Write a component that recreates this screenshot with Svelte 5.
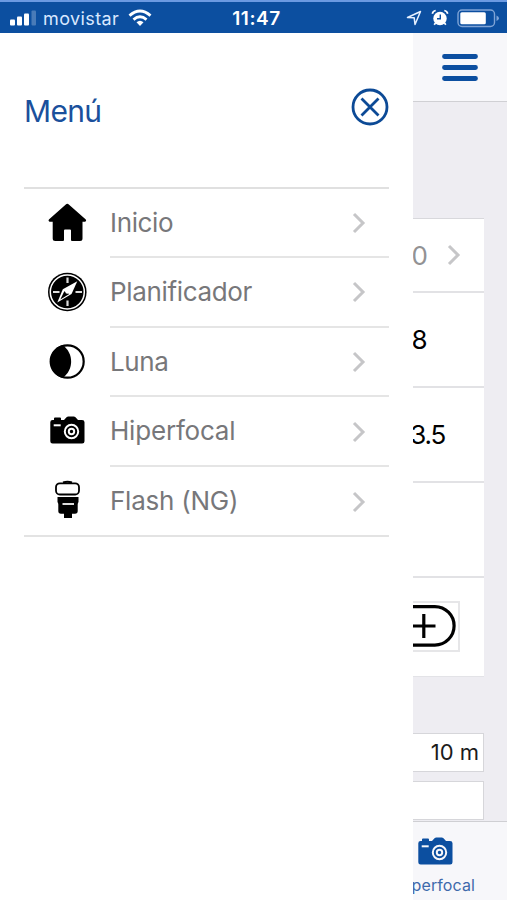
<script lang="ts">
  type Item = { icon: string; label: string; spacing: number };

  const items: Item[] = [
    { icon: 'home', label: 'Inicio', spacing: -0.35 },
    { icon: 'compass', label: 'Planificador', spacing: -0.35 },
    { icon: 'moon', label: 'Luna', spacing: -0.4 },
    { icon: 'camera', label: 'Hiperfocal', spacing: -0.2 },
    { icon: 'flash', label: 'Flash (NG)', spacing: -0.25 }
  ];

  let open = $state(true);
</script>

{#snippet chevron()}
  <svg class="chevron" width="14" height="22" viewBox="0 0 14 22">
    <path d="M2 2l9 9-9 9" fill="none" stroke="#c6c6c8" stroke-width="3" />
  </svg>
{/snippet}

{#snippet camera(bg: string)}
  <svg width="40" height="40" viewBox="0 0 40 40">
    <path d="M7 7.500q0-1 1-1h5q1 0 1 1v1.500h3l2.500-2.700q.8-.8 1.800-.8h5.400q1 0 1.800.8l2.500 2.700H35q2.500 0 2.500 2.300v18.900q0 2.300-2.300 2.300H5.600q-2.300 0-2.300-2.300V11.300Q3.300 9 5.600 9H7z" fill="currentColor" />
    <path d="M6.700 14.300h7" stroke={bg} stroke-width="2" />
    <circle cx="24.500" cy="20.500" r="6.700" fill="none" stroke={bg} stroke-width="2" />
    <circle cx="24.500" cy="20.500" r="2.700" fill="none" stroke={bg} stroke-width="2" />
  </svg>
{/snippet}

<div class="screen">
  <div class="status">
    <div class="carrier">
      <svg width="28" height="18" viewBox="0 0 28 18" fill="#fff">
        <rect x="0" y="10.500" width="5" height="6" rx="1" />
        <rect x="7" y="7.500" width="5" height="9" rx="1" />
        <rect x="14" y="4.500" width="5" height="12" rx="1" />
        <rect x="21.500" y="1.500" width="4.500" height="15" rx="1" opacity=".25" />
      </svg>
      <span>movistar</span>
      <svg class="wifi" width="24" height="18" viewBox="0 0 24 18" fill="none" stroke="#fff" stroke-width="2.800">
        <path d="M1.500 6.600Q12-2.700 22.500 6.600" />
        <path d="M5.500 10.600Q12 5 18.500 10.600" />
        <path d="M12 17l-3.500-3.800Q12 10.200 15.500 13.200z" fill="#fff" stroke="none" />
      </svg>
    </div>
    <div class="time">11:47</div>
    <div class="indicators">
      <svg width="16" height="16" viewBox="0 0 16 16">
        <path d="M1.500 7.500L14.500 1.500 9 14.500 8.200 7.800z" fill="none" stroke="#e6f0ff" stroke-width="1.500" stroke-linejoin="round" />
      </svg>
      <svg class="alarm" width="18" height="18" viewBox="0 0 18 18">
        <circle cx="9" cy="9.500" r="6.700" fill="#fff" />
        <path d="M1.300 4.700Q2 2 4.700 1.500M16.700 4.700Q16 2 13.300 1.500M4.500 14l-1.300 1.800M13.500 14l1.300 1.800" fill="none" stroke="#fff" stroke-width="1.700" />
        <path d="M9.300 5.500v4.300H6" fill="none" stroke="#0c4fa0" stroke-width="1.400" />
      </svg>
      <svg width="43" height="19" viewBox="0 0 43 19">
        <rect x="1" y="1" width="36.500" height="16.500" rx="4" fill="none" stroke="#7fa4d6" stroke-width="1.400" />
        <rect x="3.300" y="3.300" width="25.500" height="12" rx="1.500" fill="#fff" />
        <path d="M39.500 6.500q2.500 1 2.500 2.800t-2.500 2.800z" fill="#7fa4d6" />
      </svg>
    </div>
  </div>

  <div class="body">
    {#if open}
      <nav class="drawer">
        <header>
          <h1>Menú</h1>
          <button aria-label="Cerrar" onclick={() => (open = false)}>
            <svg width="38" height="38" viewBox="0 0 38 38" fill="none" stroke="#0c4a96">
              <circle cx="19" cy="19" r="17" stroke-width="2.800" />
              <path d="M10.500 10.500l17 17M27.500 10.500l-17 17" stroke-width="2.800" />
            </svg>
          </button>
        </header>
        <ul>
          {#each items as item (item.label)}
            <li>
              <span class="icon">
                {#if item.icon === 'home'}
                  <svg width="40" height="40" viewBox="0 0 40 40">
                    <path d="M20.300.8q.8 0 1.500.7L38.800 16.500q1 1.500-.6 2.300H35.500V35.500q0 2.500-2.500 2.500H25q-1 0-1-1V27.500q0-1-1-1h-5q-1 0-1 1V37q0 1-1 1H8.200Q5.700 38 5.700 35.500V18.800H2.500q-1.700-.8-.6-2.300L18.800 1.500q.7-.7 1.500-.7z" />
                  </svg>
                {:else if item.icon === 'compass'}
                  <svg width="40" height="40" viewBox="0 0 40 40">
                    <circle cx="20.300" cy="20" r="19.300" />
                    <circle cx="20.300" cy="20" r="17" fill="none" stroke="#fff" stroke-width="1.500" />
                    <path d="M20.500 5.500v5.500M20.500 28.500v5.500M6 20h6.500M28.500 20H35" stroke="#ddd" stroke-width="2.200" />
                    <path d="M30.300 9.300L15.800 17.300 10.300 30.500 24.500 22z" fill="#fff" />
                    <path d="M17.300 19.300l5 2.700L13.300 27.500z" fill="#000" />
                    <circle cx="20.300" cy="19.800" r="2" fill="#fff" />
                  </svg>
                {:else if item.icon === 'moon'}
                  <svg width="40" height="40" viewBox="0 0 40 40">
                    <circle cx="20.500" cy="19.500" r="16.200" fill="#fff" stroke="#000" stroke-width="2.200" />
                    <path d="M15.500 3C27 11 27 28 15.500 36A17 17 0 0 1 15.500 3z" />
                  </svg>
                {:else if item.icon === 'camera'}
                  {@render camera('#fff')}
                {:else}
                  <svg width="40" height="40" viewBox="0 0 40 40">
                    <path d="M16 2.500q4.500-1.300 9 0" fill="none" stroke="#000" stroke-width="2" />
                    <rect x="9" y="3.300" width="23" height="11.200" rx="3.800" fill="#fff" stroke="#000" stroke-width="1.800" />
                    <path d="M10.500 17h21v5q-.8 1-.8 2.500V31q0 2.800-2.700 2.800h-3V38h-8v-4.200h-3q-2.700 0-2.700-2.800v-6.500q0-1.500-.8-2.500z" />
                    <path d="M15.500 24h11.500" stroke="#ddd" stroke-width="2" />
                  </svg>
                {/if}
              </span>
              <span class="row">
                <span class="label" style="letter-spacing: {item.spacing}px">{item.label}</span>
                {@render chevron()}
              </span>
            </li>
          {/each}
        </ul>
      </nav>
    {/if}

    <main>
      <header class="toolbar">
        <button aria-label="Menú" onclick={() => (open = !open)}>
          <svg width="36" height="28" viewBox="0 0 36 28" stroke="#0c4fa0" stroke-width="4.800" stroke-linecap="round">
            <path d="M2.500 3.500h31M2.500 14.500h31M2.500 25.500h31" />
          </svg>
        </button>
      </header>
      <div class="content">
        <div class="card">
          <div class="cell link"><span>0</span>{@render chevron()}</div>
          <div class="cell value"><span>8</span></div>
          <div class="cell value wide"><span>3.5</span></div>
          <div class="cell"></div>
          <div class="cell stepper">
            <div class="frame">
              <svg width="78" height="42" viewBox="0 0 78 42" fill="none" stroke="#000" stroke-width="3.200">
                <rect x="1.600" y="1.600" width="73.500" height="38.500" rx="19.250" />
                <path d="M33 21h23.500M44.800 9v24" />
              </svg>
            </div>
          </div>
        </div>
        <div class="field">10 m</div>
        <div class="field"></div>
      </div>
      <footer class="tab">
        {@render camera('#f7f7fa')}
        <span>Hiperfocal</span>
      </footer>
    </main>
  </div>
</div>

<style>
  :global(body) { margin: 0; background: #fff; }
  * { box-sizing: border-box; }
  .screen { width: 507px; height: 900px; display: flex; flex-direction: column; overflow: hidden; font-family: Inter, "Liberation Sans", sans-serif; }
  svg { display: block; flex: none; }
  button { border: 0; padding: 0; background: none; cursor: pointer; }

  .status { height: 33px; flex: none; display: grid; grid-template-columns: 1fr auto 1fr; align-items: center; padding: 1px 7px 0 10px; background: #0c4fa0; border-top: 2px solid #6b9ae2; color: #fff; }
  .carrier { display: flex; align-items: center; font-size: 18px; letter-spacing: 0.4px; color: #d9e8ff; }
  .carrier span { margin-left: 5px; }
  .wifi { margin-left: 9px; }
  .time { padding-left: 3px; font-size: 19px; font-weight: 600; letter-spacing: 0.6px; }
  .indicators { display: flex; justify-content: flex-end; align-items: center; }
  .alarm { margin: 0 8px 0 9px; }

  .body { flex: 1; display: flex; min-height: 0; }
  .drawer { width: 413px; flex: none; padding: 0 24px; background: #fff; }
  .drawer header { height: 154px; display: flex; justify-content: space-between; align-items: flex-start; padding-top: 55px; }
  h1 { margin: 5px 0 0; font-size: 30px; line-height: 36px; font-weight: 400; letter-spacing: -0.7px; color: #1a509c; }
  ul { list-style: none; margin: 0; padding: 0; border-top: 2px solid #e0e0e0; border-bottom: 2px solid #e3e3e3; }
  li { display: flex; height: 69.7px; }
  li:first-child { height: 69px; }
  li:last-child { height: 68px; }
  .icon { width: 86px; flex: none; display: flex; align-items: center; padding: 0 0 2px 23px; }
  .row { flex: 1; display: flex; justify-content: space-between; align-items: center; padding: 1px 23px 0 0; border-bottom: 2px solid #e5e5e5; font-size: 26px; color: #77777a; }
  .label { padding-bottom: 2px; }
  li:last-child .row { border-bottom: 0; }

  main { flex: 1; min-width: 0; display: flex; flex-direction: column; background: #eeedf2; overflow: hidden; }
  .toolbar { height: 69px; flex: none; display: flex; justify-content: flex-end; align-items: center; padding-right: 29px; background: #f7f7fa; border-bottom: 1px solid #d0d0d4; }
  .content { flex: 1; padding: 116px 23px 0 0; }
  .card { background: #fff; border-top: 1px solid #d8d8dc; border-bottom: 1px solid #e3e3e7; }
  .cell { height: 95px; display: flex; align-items: center; border-bottom: 2px solid #e2e2e5; }
  .link { height: 74px; justify-content: flex-end; gap: 19px; padding-right: 23px; font-size: 26px; color: #929294; }
  .value { justify-content: flex-end; padding-right: 57px; font-size: 26px; letter-spacing: -0.5px; color: #000; }
  .wide { padding-right: 39px; letter-spacing: -1.2px; }
  .stepper { height: 98px; justify-content: flex-end; padding: 0 24px 1px 0; border-bottom: 0; }
  .frame { padding: 2px 1px 3px 4px; border: 2px solid #e6e6e8; }
  .field { height: 39px; margin-top: 56px; padding: 0 4px 2px 0; display: flex; justify-content: flex-end; align-items: center; background: #fff; border: 1px solid #d6d6da; border-left: 0; font-size: 22px; color: #1b1b1b; }
  .field + .field { margin-top: 9px; }
  .tab { height: 79px; flex: none; display: flex; flex-direction: column; align-items: flex-end; padding: 10px 32px 0 0; background: #f7f7fa; border-top: 1px solid #cfcfd3; color: #0c4fa0; }
  .tab svg { margin-right: 20px; }
  .tab span { font-size: 16px; line-height: 20px; margin-top: 3px; letter-spacing: 0.1px; color: #3e6aab; }
</style>
